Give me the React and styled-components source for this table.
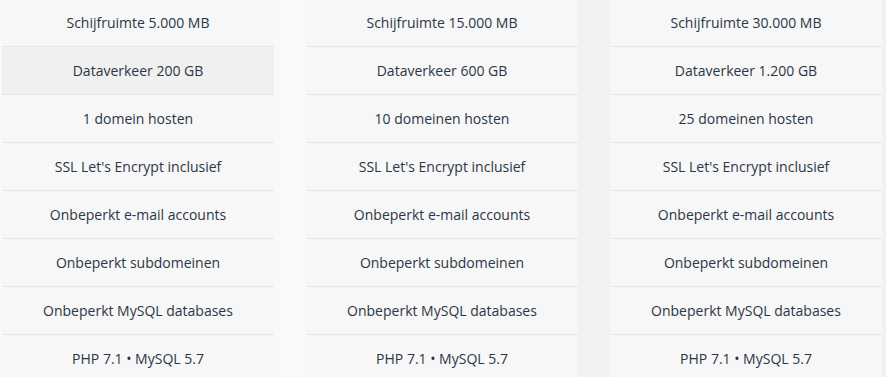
import React from 'react'
import styled, { createGlobalStyle } from 'styled-components'

const plans = [
  {
    id: 'basic',
    features: [
      'Schijfruimte 5.000 MB',
      'Dataverkeer 200 GB',
      '1 domein hosten',
      "SSL Let's Encrypt inclusief",
      'Onbeperkt e-mail accounts',
      'Onbeperkt subdomeinen',
      'Onbeperkt MySQL databases',
      'PHP 7.1 • MySQL 5.7'
    ],
    active: 1
  },
  {
    id: 'plus',
    features: [
      'Schijfruimte 15.000 MB',
      'Dataverkeer 600 GB',
      '10 domeinen hosten',
      "SSL Let's Encrypt inclusief",
      'Onbeperkt e-mail accounts',
      'Onbeperkt subdomeinen',
      'Onbeperkt MySQL databases',
      'PHP 7.1 • MySQL 5.7'
    ]
  },
  {
    id: 'pro',
    features: [
      'Schijfruimte 30.000 MB',
      'Dataverkeer 1.200 GB',
      '25 domeinen hosten',
      "SSL Let's Encrypt inclusief",
      'Onbeperkt e-mail accounts',
      'Onbeperkt subdomeinen',
      'Onbeperkt MySQL databases',
      'PHP 7.1 • MySQL 5.7'
    ]
  }
]

const App = () => {
  return (
    <>
      <GlobalStyle />
      <Pricing>
        {plans.map(plan => (
          <Column key={plan.id}>
            {plan.features.map((feature, i) => (
              <FeatureRow key={feature} active={i === plan.active}>
                {feature}
              </FeatureRow>
            ))}
          </Column>
        ))}
      </Pricing>
    </>
  )
}

const GlobalStyle = createGlobalStyle`
  html, body {
    margin: 0;
    padding: 0;
    height: 100%;
    overflow: hidden;
  }

  body {
    font-family: "Open Sans", "Liberation Sans", sans-serif;
    background: linear-gradient(90deg, #f9f9f9 0 306px, #f1f1f1 306px);
  }
`

const Pricing = styled.div`
  display: grid;
  grid-template-columns: repeat(3, 272px);
  column-gap: 32px;
  padding-left: 2px;
  margin-top: -1px;
`

const Column = styled.ul`
  list-style: none;
  margin: 0;
  padding: 0;
  background-color: #f7f7f7;
  display: flex;
  flex-direction: column;
`

const FeatureRow = styled.li`
  height: 47px;
  display: flex;
  align-items: center;
  justify-content: center;
  border-bottom: 1px solid #e6e6e6;
  background-color: ${props => (props.active ? '#f0f0f0' : '#f7f7f7')};
  color: #2a3646;
  font-size: 14px;
  line-height: 20px;
`

export default App
